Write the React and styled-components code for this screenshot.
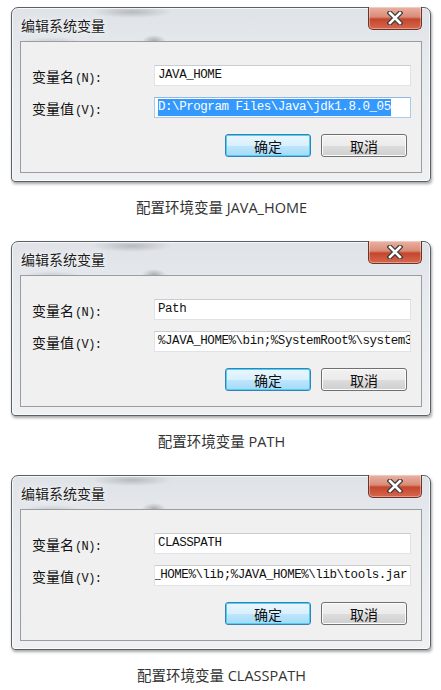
import React from 'react';
import styled, { createGlobalStyle } from 'styled-components';

const GlobalStyle = createGlobalStyle`
  html, body {
    margin: 0;
    padding: 0;
    background: #ffffff;
  }
  body {
    font-family: "Noto Sans CJK SC", sans-serif;
  }
`;

const MONO = '"Liberation Mono", "DejaVu Sans Mono", monospace';
const CJK = '"Noto Sans CJK SC", sans-serif';

const Page = styled.div`
  width: 441px;
  padding-top: 7px;
`;

const Figure = styled.section`
  margin-bottom: 23px;
`;

const Window = styled.div`
  width: 420px;
  margin-left: 11px;
  padding: 0 8px 8px;
  box-sizing: border-box;
  border: 1px solid #5b6067;
  border-radius: 7px 7px 4px 4px;
  background:
    radial-gradient(ellipse 40px 6px at 120px 4px, rgba(60, 60, 60, 0.25), transparent),
    radial-gradient(ellipse 12px 6px at 142px 33px, rgba(60, 60, 60, 0.35), transparent),
    radial-gradient(ellipse 30px 5px at 40px 34px, rgba(90, 90, 90, 0.2), transparent),
    linear-gradient(180deg, #dfe3e8 0%, #e9ecef 40%, #eef0f2 100%);
  box-shadow: 1px 2px 3px rgba(0, 0, 0, 0.35), inset 0 0 0 1px rgba(255, 255, 255, 0.7);
`;

const TitleBar = styled.div`
  height: 33px;
  display: flex;
  align-items: center;
  justify-content: space-between;
`;

const Title = styled.span`
  font-family: ${CJK};
  font-size: 14px;
  color: #1b1b1b;
  padding-left: 1px;
  margin-top: 1px;
  text-shadow: 0 0 6px rgba(255, 255, 255, 0.95), 0 0 2px rgba(255, 255, 255, 0.9);
`;

const CloseButton = styled.div`
  align-self: flex-start;
  width: 54px;
  height: 23px;
  margin-top: -1px;
  box-sizing: border-box;
  display: flex;
  align-items: center;
  justify-content: center;
  border: 1px solid #6e3328;
  border-top: none;
  border-radius: 0 0 5px 5px;
  background: linear-gradient(180deg, #eab2a4 0%, #d98c78 45%, #c4462c 55%, #d7674d 100%);
  box-shadow: inset 0 0 0 1px rgba(255, 255, 255, 0.35);
`;

const Panel = styled.div`
  border: 1px solid #9a9c9f;
  background: #f0f0f0;
  padding: 23px 12px 15px 11px;
`;

const Grid = styled.div`
  display: grid;
  grid-template-columns: 122px 257px;
  row-gap: 11px;
  align-items: center;
`;

const Label = styled.div`
  font-family: ${CJK};
  font-size: 14px;
  color: #111;
  display: flex;
  align-items: baseline;
`;

const Key = styled.span`
  font-family: ${MONO};
  font-size: 12px;
  letter-spacing: -0.6px;
  margin-left: 1px;
`;

const Field = styled.div`
  height: 21px;
  box-sizing: border-box;
  display: flex;
  align-items: center;
  justify-content: ${({ $end }) => ($end ? 'flex-end' : 'flex-start')};
  padding: 0 3px;
  overflow: hidden;
  background: #ffffff;
  border: 1px solid ${({ $focused }) => ($focused ? '#a9cbeb' : '#dfe2e6')};
  border-top-color: ${({ $focused }) => ($focused ? '#8fb7df' : '#c9ccd1')};
`;

const Value = styled.span`
  flex-shrink: 0;
  white-space: nowrap;
  font-family: ${MONO};
  font-size: 12.5px;
  letter-spacing: -0.45px;
  line-height: 17px;
  color: ${({ $selected }) => ($selected ? '#ffffff' : '#111111')};
  background: ${({ $selected }) => ($selected ? '#3399ff' : 'transparent')};
`;

const ButtonRow = styled.div`
  display: flex;
  justify-content: flex-end;
  gap: 10px;
  margin-top: 16px;
  padding-right: 2px;
`;

const Button = styled.div`
  width: 86px;
  height: 23px;
  box-sizing: border-box;
  display: flex;
  align-items: center;
  justify-content: center;
  font-family: ${CJK};
  font-size: 14px;
  color: #111;
  border-radius: 3px;
  border: 1px solid ${({ $primary }) => ($primary ? '#3c7fb1' : '#707070')};
  background: ${({ $primary }) =>
    $primary
      ? 'linear-gradient(180deg, #eaf6fd 0%, #d9f0fc 50%, #bee6fd 51%, #a7d9f5 100%)'
      : 'linear-gradient(180deg, #f2f2f2 0%, #ebebeb 50%, #dddddd 51%, #cfcfcf 100%)'};
  box-shadow: inset 0 0 0 1px ${({ $primary }) => ($primary ? '#48d2f9' : '#fcfcfc')};
`;

const Caption = styled.div`
  margin-top: 16px;
  height: 20px;
  line-height: 20px;
  text-align: center;
  padding-left: 2px;
  font-family: "Open Sans", "Noto Sans CJK SC", sans-serif;
  font-size: 14.5px;
  color: #333333;
`;

const CloseIcon = () => (
  <svg width="16" height="14" viewBox="0 0 16 14">
    <path d="M3 2 L13 12 M13 2 L3 12" stroke="#3a3a3a" strokeWidth="5" strokeLinecap="square" />
    <path d="M3 2 L13 12 M13 2 L3 12" stroke="#ffffff" strokeWidth="2.6" strokeLinecap="square" />
  </svg>
);

const DIALOGS = [
  {
    name: 'JAVA_HOME',
    value: 'D:\\Program Files\\Java\\jdk1.8.0_05',
    selected: true,
    caption: '配置环境变量 JAVA_HOME',
  },
  {
    name: 'Path',
    value: '%JAVA_HOME%\\bin;%SystemRoot%\\system32;%SystemRoot%;',
    caption: '配置环境变量 PATH',
  },
  {
    name: 'CLASSPATH',
    value: '.;%JAVA_HOME%\\lib;%JAVA_HOME%\\lib\\tools.jar',
    end: true,
    caption: '配置环境变量 CLASSPATH',
  },
];

const EditDialog = ({ name, value, selected, end }) => (
  <Window>
    <TitleBar>
      <Title>编辑系统变量</Title>
      <CloseButton>
        <CloseIcon />
      </CloseButton>
    </TitleBar>
    <Panel>
      <Grid>
        <Label>
          变量名<Key>(N):</Key>
        </Label>
        <Field>
          <Value>{name}</Value>
        </Field>
        <Label>
          变量值<Key>(V):</Key>
        </Label>
        <Field $focused={selected} $end={end}>
          <Value $selected={selected}>{value}</Value>
        </Field>
      </Grid>
      <ButtonRow>
        <Button $primary>确定</Button>
        <Button>取消</Button>
      </ButtonRow>
    </Panel>
  </Window>
);

export default function App() {
  return (
    <Page>
      <GlobalStyle />
      {DIALOGS.map((d) => (
        <Figure key={d.name}>
          <EditDialog {...d} />
          <Caption>{d.caption}</Caption>
        </Figure>
      ))}
    </Page>
  );
}
